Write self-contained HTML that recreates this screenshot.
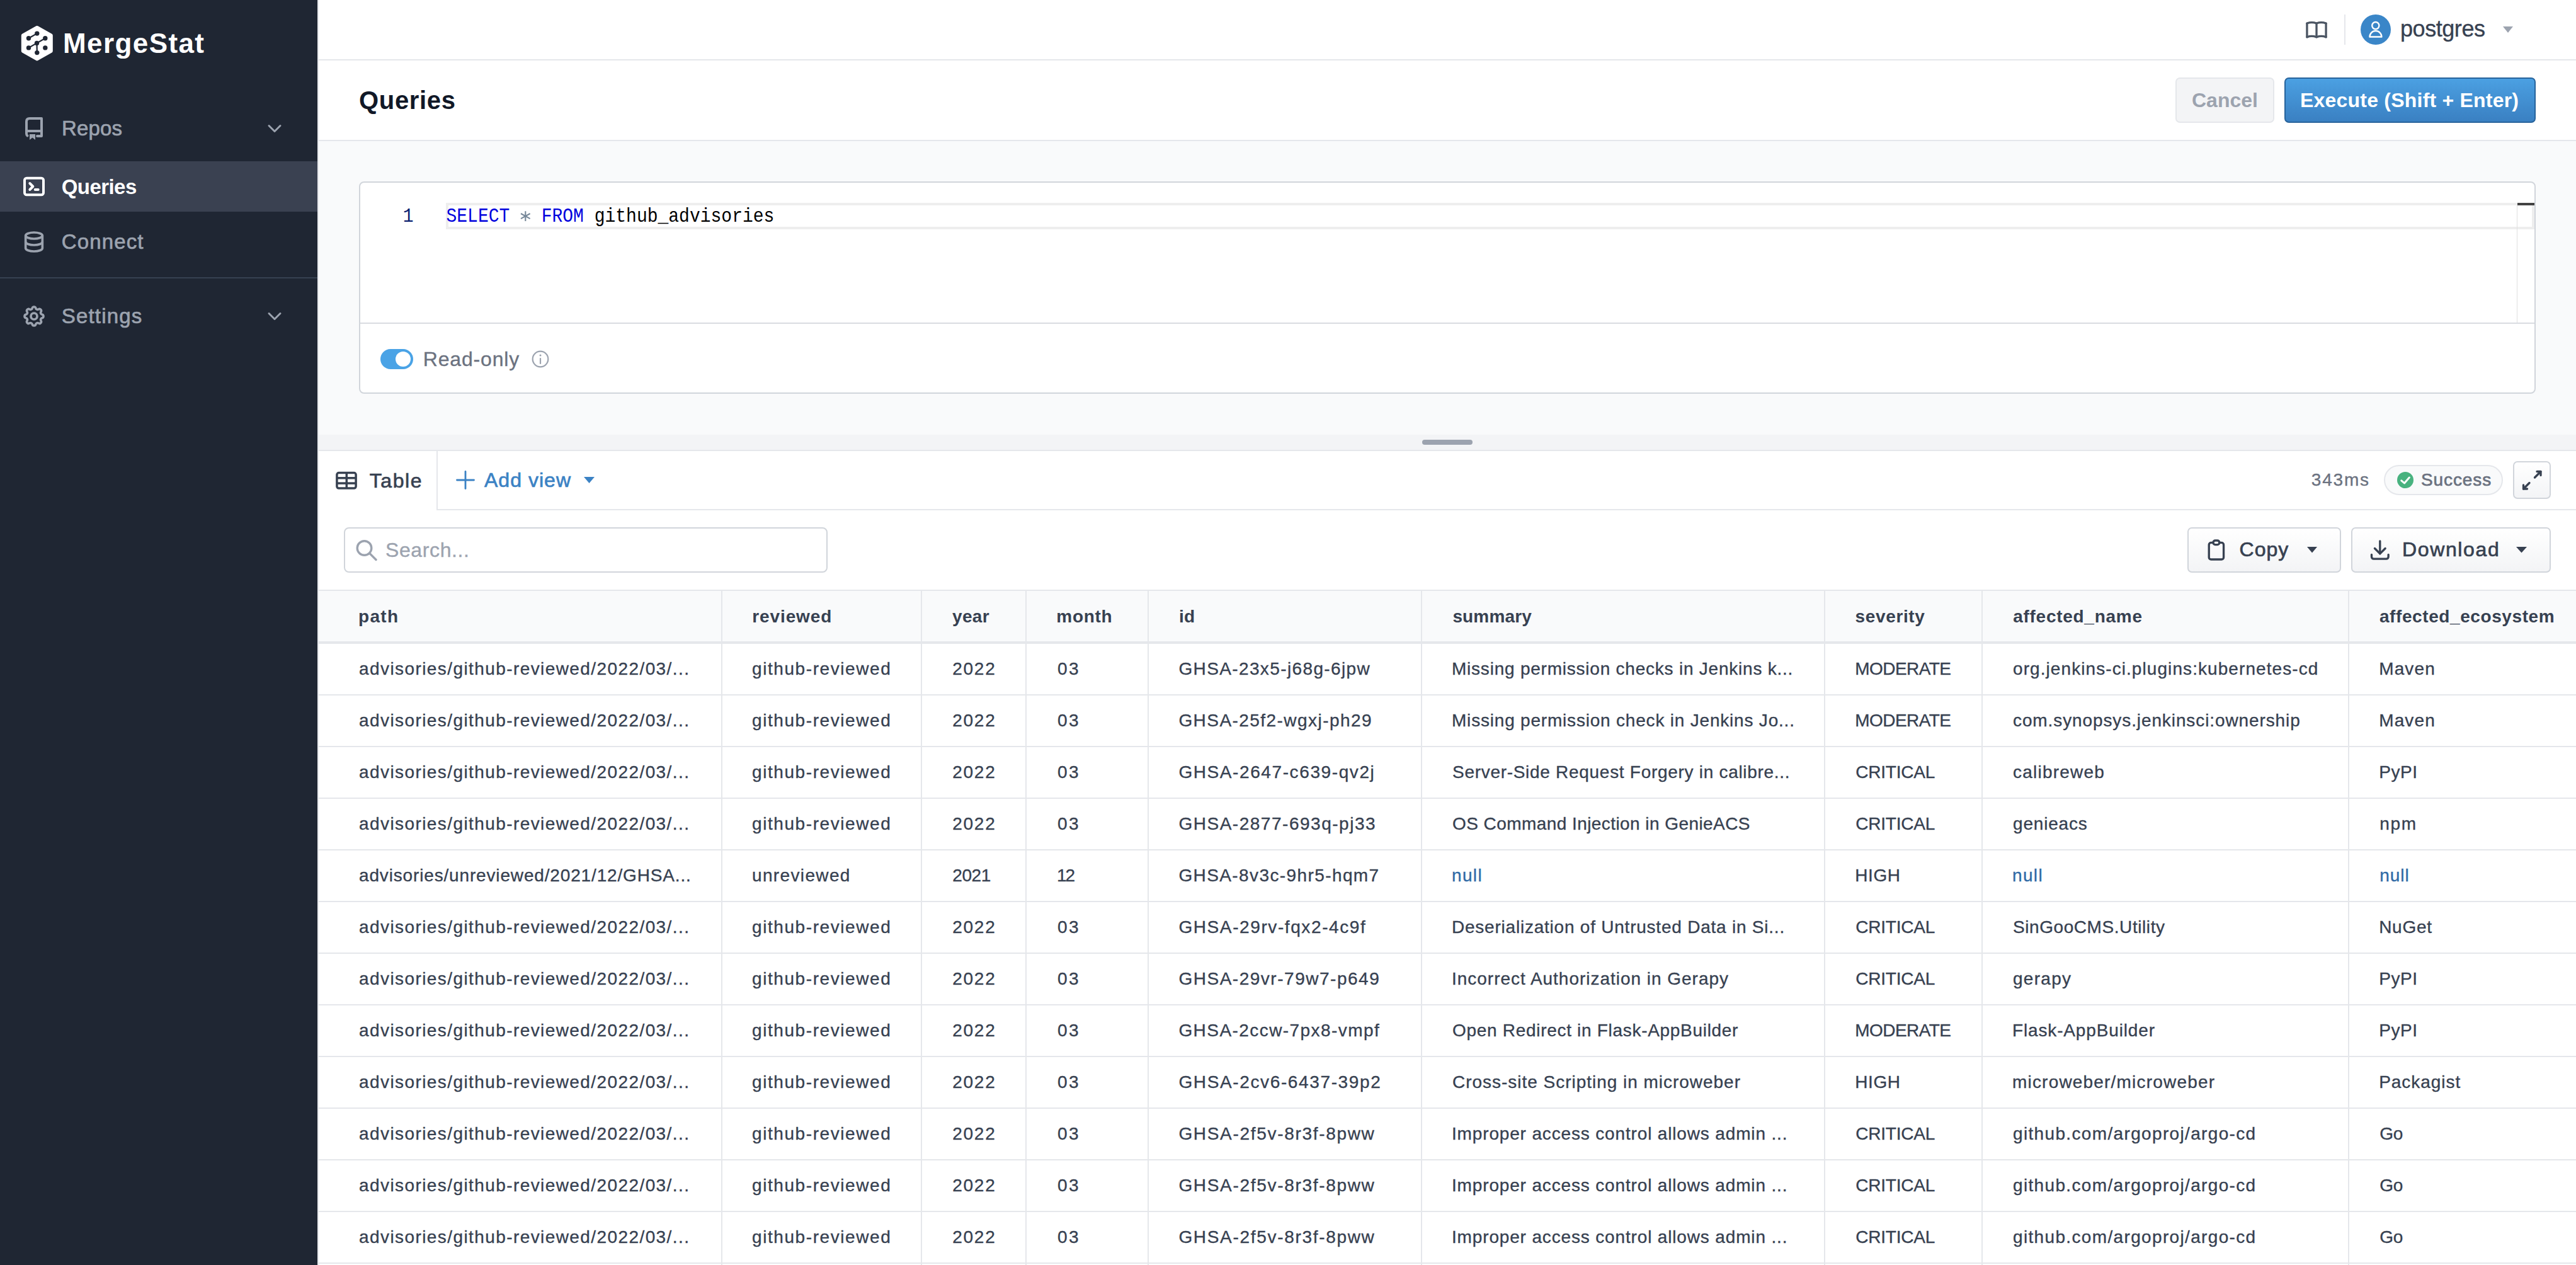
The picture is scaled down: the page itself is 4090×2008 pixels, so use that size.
<!DOCTYPE html><html><head><meta charset="utf-8"><style>html,body{margin:0;padding:0;width:4090px;height:2008px;overflow:hidden;background:#fff;}body{position:relative;font-family:"Liberation Sans",sans-serif;}</style></head><body><div style="position:absolute;left:0px;top:0px;width:504px;height:2008px;background:#1f2633"></div><div style="position:absolute;left:504px;top:0px;width:2px;height:2008px;background:#e5e7eb"></div><svg style="position:absolute;left:30px;top:36px;" width="60" height="64" viewBox="30 36 60 64">
<path d="M58.8 43.8 L81 56.3 L81 81 L58.8 93.6 L36.6 81 L36.6 56.3 Z" fill="#fff" stroke="#fff" stroke-width="5.6" stroke-linejoin="round"/>
<g stroke="#1f2633" stroke-width="2.2" fill="none"><path d="M45.5 60.8 L58.8 53.1"/><path d="M45.5 75.9 L71.8 60.8"/><path d="M58.5 68.5 L58.8 83.6"/></g>
<g fill="#1f2633"><circle cx="58.8" cy="53.1" r="3.7"/><circle cx="45.5" cy="60.8" r="3.7"/><circle cx="71.8" cy="60.8" r="3.7"/><circle cx="58.5" cy="68.5" r="3.7"/><circle cx="45.5" cy="75.9" r="3.7"/><circle cx="71.8" cy="75.9" r="3.7"/><circle cx="58.8" cy="83.6" r="3.7"/></g>
</svg><div style="position:absolute;left:100.00px;top:46.75px;font-family:'Liberation Sans', sans-serif;font-size:44px;line-height:44px;font-weight:700;color:#ffffff;letter-spacing:1.410px;white-space:pre;">MergeStat</div><div style="position:absolute;left:0px;top:256px;width:504px;height:80px;background:#3a4151"></div><div style="position:absolute;left:0px;top:440px;width:504px;height:2px;background:#374151"></div><svg style="position:absolute;left:34px;top:180px;" width="40" height="46" viewBox="34 180 40 46"><g stroke="#9ca3af" stroke-width="4" fill="none" stroke-linecap="round" stroke-linejoin="round">
<path d="M59 216 H66 V188 H47 Q42 188 42 193 V212 Q42 214.5 43.5 215.5"/><path d="M42 208 H66"/></g>
<path d="M47 213 H56 V222 L51.5 218.5 L47 222 Z" fill="#9ca3af"/></svg><div style="position:absolute;left:98.00px;top:187.07px;font-family:'Liberation Sans', sans-serif;font-size:33px;line-height:33px;font-weight:400;color:#9ca3af;letter-spacing:0.152px;white-space:pre;-webkit-text-stroke:0.7px currentColor">Repos</div><svg style="position:absolute;left:420px;top:190px;" width="32" height="26" viewBox="420 190 32 26"><path d="M427 199.5 L436 208.5 L445 199.5" stroke="#9ca3af" stroke-width="3" fill="none" stroke-linecap="round" stroke-linejoin="round"/></svg><svg style="position:absolute;left:34px;top:276px;" width="40" height="40" viewBox="34 276 40 40"><g transform="translate(34 276) scale(1.6667)" stroke="#fff" stroke-width="2.4" fill="none" stroke-linecap="round" stroke-linejoin="round">
<path d="M8 9l3 3l-3 3"/><path d="M13 15l3 0"/><path d="M3 6a2 2 0 0 1 2 -2h14a2 2 0 0 1 2 2v12a2 2 0 0 1 -2 2h-14a2 2 0 0 1 -2 -2z"/></g></svg><div style="position:absolute;left:97.70px;top:279.67px;font-family:'Liberation Sans', sans-serif;font-size:33px;line-height:33px;font-weight:700;color:#ffffff;letter-spacing:-0.551px;white-space:pre;">Queries</div><svg style="position:absolute;left:34px;top:364px;" width="40" height="40" viewBox="34 364 40 40"><g transform="translate(34 364) scale(1.6667)" stroke="#9ca3af" stroke-width="2.2" fill="none" stroke-linecap="round" stroke-linejoin="round">
<path d="M4 6a8 3 0 1 0 16 0a8 3 0 1 0 -16 0"/><path d="M4 6v6a8 3 0 0 0 16 0v-6"/><path d="M4 12v6a8 3 0 0 0 16 0v-6"/></g></svg><div style="position:absolute;left:97.70px;top:367.07px;font-family:'Liberation Sans', sans-serif;font-size:33px;line-height:33px;font-weight:400;color:#9ca3af;letter-spacing:1.147px;white-space:pre;-webkit-text-stroke:0.7px currentColor">Connect</div><svg style="position:absolute;left:34px;top:482px;" width="40" height="40" viewBox="34 482 40 40"><g transform="translate(34 482) scale(1.6667)" stroke="#9ca3af" stroke-width="2.2" fill="none" stroke-linecap="round" stroke-linejoin="round">
<path d="M10.325 4.317c.426 -1.756 2.924 -1.756 3.35 0a1.724 1.724 0 0 0 2.573 1.066c1.543 -.94 3.31 .826 2.37 2.37a1.724 1.724 0 0 0 1.065 2.572c1.756 .426 1.756 2.924 0 3.35a1.724 1.724 0 0 0 -1.066 2.573c.94 1.543 -.826 3.31 -2.37 2.37a1.724 1.724 0 0 0 -2.572 1.065c-.426 1.756 -2.924 1.756 -3.35 0a1.724 1.724 0 0 0 -2.573 -1.066c-1.543 .94 -3.31 -.826 -2.37 -2.37a1.724 1.724 0 0 0 -1.065 -2.572c-1.756 -.426 -1.756 -2.924 0 -3.35a1.724 1.724 0 0 0 1.066 -2.573c-.94 -1.543 .826 -3.31 2.37 -2.37c1 .608 2.296 .07 2.572 -1.065z"/><path d="M9 12a3 3 0 1 0 6 0a3 3 0 1 0 -6 0"/></g></svg><div style="position:absolute;left:97.70px;top:485.07px;font-family:'Liberation Sans', sans-serif;font-size:33px;line-height:33px;font-weight:400;color:#9ca3af;letter-spacing:1.192px;white-space:pre;-webkit-text-stroke:0.7px currentColor">Settings</div><svg style="position:absolute;left:420px;top:488px;" width="32" height="26" viewBox="420 488 32 26"><path d="M427 497.5 L436 506.5 L445 497.5" stroke="#9ca3af" stroke-width="3" fill="none" stroke-linecap="round" stroke-linejoin="round"/></svg><div style="position:absolute;left:506px;top:94px;width:3584px;height:2px;background:#e5e7eb"></div><svg style="position:absolute;left:3655px;top:25px;" width="45" height="43" viewBox="3655 25 45 43"><g transform="translate(3657.9 27) scale(1.675)" stroke="#4b5563" stroke-width="2" fill="none" stroke-linecap="round" stroke-linejoin="round">
<path d="M3 19a13 13 0 0 1 9 0a13 13 0 0 1 9 0"/><path d="M3 6a13 13 0 0 1 9 0a13 13 0 0 1 9 0"/><path d="M3 6l0 13"/><path d="M12 6l0 13"/><path d="M21 6l0 13"/></g></svg><div style="position:absolute;left:3722px;top:23px;width:2px;height:48px;background:#e5e7eb"></div><svg style="position:absolute;left:3746px;top:21px;" width="52" height="52" viewBox="3746 21 52 52"><circle cx="3772" cy="47" r="24" fill="#3a86c8"/>
<circle cx="3771.8" cy="40.6" r="5.6" stroke="#fff" stroke-width="2.4" fill="none"/>
<path d="M3762.4 58.5 A 9.4 9.4 0 0 1 3781.4 58.5 Z" stroke="#fff" stroke-width="2.4" fill="none" stroke-linejoin="round"/></svg><div style="position:absolute;left:3811.00px;top:27.53px;font-family:'Liberation Sans', sans-serif;font-size:36px;line-height:36px;font-weight:400;color:#374151;letter-spacing:-0.440px;white-space:pre;-webkit-text-stroke:0.35px currentColor">postgres</div><svg style="position:absolute;left:3970px;top:38px;" width="24" height="18" viewBox="3970 38 24 18"><path d="M3974 42 H3990 L3982 52 Z" fill="#9ca3af"/></svg><div style="position:absolute;left:506px;top:222px;width:3584px;height:2px;background:#e5e7eb"></div><div style="position:absolute;left:570.00px;top:139.14px;font-family:'Liberation Sans', sans-serif;font-size:40px;line-height:40px;font-weight:700;color:#111827;letter-spacing:0.672px;white-space:pre;">Queries</div><div style="position:absolute;left:3454px;top:123px;width:157px;height:72px;box-sizing:border-box;border:2px solid #e5e7eb;background:#f3f4f6;border-radius:7px"></div><div style="position:absolute;left:3480.00px;top:142.91px;font-family:'Liberation Sans', sans-serif;font-size:32px;line-height:32px;font-weight:700;color:#9ca3af;letter-spacing:0.012px;white-space:pre;">Cancel</div><div style="position:absolute;left:3627px;top:123px;width:399px;height:72px;box-sizing:border-box;border:2px solid #27639b;background:linear-gradient(#4ba0e2,#3a80c2);border-radius:7px"></div><div style="position:absolute;left:3652.00px;top:142.91px;font-family:'Liberation Sans', sans-serif;font-size:32px;line-height:32px;font-weight:700;color:#ffffff;letter-spacing:0.214px;white-space:pre;">Execute (Shift + Enter)</div><div style="position:absolute;left:506px;top:224px;width:3584px;height:466px;background:#f9fafb"></div><div style="position:absolute;left:570px;top:288px;width:3456px;height:337px;box-sizing:border-box;border:2px solid #d1d5db;background:#fff;border-radius:8px"></div><div style="position:absolute;left:708px;top:322px;width:3316px;height:42px;box-sizing:border-box;border:4px solid #eeeeee;border-right-width:4px"></div><div style="position:absolute;left:3996px;top:326px;width:1px;height:187px;background:#e0e0e0"></div><div style="position:absolute;left:3997px;top:322px;width:27px;height:4px;background:#424242"></div><div style="position:absolute;left:639.80px;top:330.54px;font-family:'Liberation Mono', monospace;font-size:28px;line-height:28px;font-weight:400;color:#0b216f;letter-spacing:0.000px;white-space:pre;transform:scaleY(1.15);transform-origin:0 21.46px;">1</div><div style="position:absolute;left:708.50px;top:330.54px;font-family:'Liberation Mono', monospace;font-size:28px;line-height:28px;font-weight:400;color:#0000dd;letter-spacing:0.000px;white-space:pre;transform:scaleY(1.15);transform-origin:0 21.46px;">SELECT</div><div style="position:absolute;left:859.70px;top:330.54px;font-family:'Liberation Mono', monospace;font-size:28px;line-height:28px;font-weight:400;color:#0000dd;letter-spacing:0.000px;white-space:pre;transform:scaleY(1.15);transform-origin:0 21.46px;">FROM</div><div style="position:absolute;left:926.90px;top:330.54px;font-family:'Liberation Mono', monospace;font-size:28px;line-height:28px;font-weight:400;color:#000000;letter-spacing:0.000px;white-space:pre;transform:scaleY(1.15);transform-origin:0 21.46px;"> github_advisories</div><svg style="position:absolute;left:822px;top:332px;" width="26" height="22" viewBox="822 332 26 22"><g stroke="#778899" stroke-width="2.1" stroke-linecap="butt"><path d="M834.3 335.2 V351"/><path d="M827 339 L841.6 347.2"/><path d="M827 347.2 L841.6 339"/></g></svg><div style="position:absolute;left:572px;top:512px;width:3452px;height:2px;background:#d9dce1"></div><div style="position:absolute;left:604px;top:554px;width:52px;height:32px;background:#4aa3e6;border-radius:16px"></div><div style="position:absolute;left:628px;top:558px;width:24px;height:24px;background:#fff;border-radius:12px"></div><div style="position:absolute;left:671.80px;top:553.91px;font-family:'Liberation Sans', sans-serif;font-size:32px;line-height:32px;font-weight:400;color:#6b7280;letter-spacing:0.821px;white-space:pre;-webkit-text-stroke:0.35px currentColor">Read-only</div><svg style="position:absolute;left:840px;top:552px;" width="36" height="36" viewBox="840 552 36 36"><circle cx="858" cy="570" r="12.3" stroke="#9ca3af" stroke-width="2.2" fill="none"/>
<circle cx="858" cy="564" r="1.5" fill="#9ca3af"/><path d="M858 569 V577" stroke="#9ca3af" stroke-width="2.2" stroke-linecap="round"/></svg><div style="position:absolute;left:506px;top:690px;width:3584px;height:24px;background:#f3f4f6"></div><div style="position:absolute;left:2258px;top:698px;width:80px;height:8px;background:#9ca3af;border-radius:4px"></div><div style="position:absolute;left:506px;top:714px;width:3584px;height:2px;background:#e5e7eb"></div><div style="position:absolute;left:694px;top:808px;width:3396px;height:2px;background:#e5e7eb"></div><div style="position:absolute;left:693px;top:716px;width:2px;height:94px;background:#e5e7eb"></div><svg style="position:absolute;left:528px;top:742px;" width="44" height="40" viewBox="528 742 44 40"><g stroke="#374151" stroke-width="3.5" fill="none" stroke-linejoin="round">
<rect x="534.9" y="750.5" width="30.2" height="24.6" rx="3"/><path d="M550.3 750.5 V775"/><path d="M535 758.8 H565"/><path d="M535 767.1 H565"/></g></svg><div style="position:absolute;left:586.70px;top:746.91px;font-family:'Liberation Sans', sans-serif;font-size:32px;line-height:32px;font-weight:400;color:#374151;letter-spacing:1.575px;white-space:pre;-webkit-text-stroke:0.7px currentColor">Table</div><svg style="position:absolute;left:720px;top:743px;" width="38" height="38" viewBox="720 743 38 38"><g stroke="#3b82c4" stroke-width="2.8" stroke-linecap="round"><path d="M739 748.5 V775.5"/><path d="M725.5 762 H752.5"/></g></svg><div style="position:absolute;left:769.00px;top:745.91px;font-family:'Liberation Sans', sans-serif;font-size:32px;line-height:32px;font-weight:400;color:#3b82c4;letter-spacing:1.022px;white-space:pre;-webkit-text-stroke:0.7px currentColor">Add view</div><svg style="position:absolute;left:922px;top:752px;" width="28" height="20" viewBox="922 752 28 20"><path d="M927 757 H944 L935.5 767 Z" fill="#3b82c4"/></svg><div style="position:absolute;left:3669.80px;top:747.90px;font-family:'Liberation Sans', sans-serif;font-size:28px;line-height:28px;font-weight:400;color:#6b7280;letter-spacing:1.788px;white-space:pre;-webkit-text-stroke:0.35px currentColor">343ms</div><div style="position:absolute;left:3785px;top:738px;width:189px;height:48px;box-sizing:border-box;border:2px solid #e5e7eb;background:#f9fafb;border-radius:24px"></div><svg style="position:absolute;left:3800px;top:745px;" width="40" height="35" viewBox="3800 745 40 35"><circle cx="3819" cy="762" r="13" fill="#48b27f"/><path d="M3812.8 762.8 L3817.5 767 L3825.3 758" stroke="#fff" stroke-width="3" fill="none" stroke-linecap="round" stroke-linejoin="round"/></svg><div style="position:absolute;left:3843.90px;top:748.30px;font-family:'Liberation Sans', sans-serif;font-size:28px;line-height:28px;font-weight:400;color:#6b7280;letter-spacing:0.929px;white-space:pre;-webkit-text-stroke:0.7px currentColor">Success</div><div style="position:absolute;left:3990px;top:732px;width:60px;height:60px;box-sizing:border-box;border:2px solid #d1d5db;background:linear-gradient(#fff,#f3f4f6);border-radius:7px"></div><svg style="position:absolute;left:3995px;top:737px;" width="50" height="50" viewBox="3995 737 50 50"><g stroke="#374151" stroke-width="3.3" fill="none" stroke-linecap="round" stroke-linejoin="round">
<path d="M4028 748.5 H4034 V754.5"/><path d="M4024.5 758 L4034 748.5"/><path d="M4012.5 776 H4006.5 V770"/><path d="M4016 766.5 L4006.5 776"/></g></svg><div style="position:absolute;left:546px;top:837px;width:768px;height:72px;box-sizing:border-box;border:2px solid #d1d5db;background:#fff;border-radius:8px"></div><svg style="position:absolute;left:560px;top:850px;" width="46" height="46" viewBox="560 850 46 46"><g stroke="#9ca3af" stroke-width="3.4" fill="none" stroke-linecap="round"><circle cx="578.5" cy="870" r="11.3"/><path d="M587 878.5 L597 888.5"/></g></svg><div style="position:absolute;left:612.00px;top:856.51px;font-family:'Liberation Sans', sans-serif;font-size:32px;line-height:32px;font-weight:400;color:#9ca3af;letter-spacing:0.617px;white-space:pre;-webkit-text-stroke:0.35px currentColor">Search...</div><div style="position:absolute;left:3473px;top:837px;width:244px;height:72px;box-sizing:border-box;border:2px solid #d1d5db;background:linear-gradient(#fff,#f3f4f6);border-radius:7px"></div><svg style="position:absolute;left:3498px;top:852px;" width="42" height="42" viewBox="3498 852 42 42"><g transform="translate(3498.9 853) scale(1.6667)" stroke="#374151" stroke-width="2" fill="none" stroke-linecap="round" stroke-linejoin="round">
<path d="M9 5h-2a2 2 0 0 0 -2 2v12a2 2 0 0 0 2 2h10a2 2 0 0 0 2 -2v-12a2 2 0 0 0 -2 -2h-2"/><path d="M9 5a2 2 0 0 1 2 -2h2a2 2 0 0 1 2 2v0a2 2 0 0 1 -2 2h-2a2 2 0 0 1 -2 -2z"/></g></svg><div style="position:absolute;left:3555.60px;top:856.41px;font-family:'Liberation Sans', sans-serif;font-size:32px;line-height:32px;font-weight:400;color:#374151;letter-spacing:0.966px;white-space:pre;-webkit-text-stroke:0.7px currentColor">Copy</div><svg style="position:absolute;left:3658px;top:862px;" width="26" height="20" viewBox="3658 862 26 20"><path d="M3663 868 H3679 L3671 877.5 Z" fill="#374151"/></svg><div style="position:absolute;left:3733px;top:837px;width:317px;height:72px;box-sizing:border-box;border:2px solid #d1d5db;background:linear-gradient(#fff,#f3f4f6);border-radius:7px"></div><svg style="position:absolute;left:3755px;top:848px;" width="45" height="47" viewBox="3755 848 45 47"><g transform="translate(3758.8 852.2) scale(1.6667)" stroke="#374151" stroke-width="2" fill="none" stroke-linecap="round" stroke-linejoin="round">
<path d="M4 17v2a2 2 0 0 0 2 2h12a2 2 0 0 0 2 -2v-2"/><path d="M7 11l5 5l5 -5"/><path d="M12 4l0 12"/></g></svg><div style="position:absolute;left:3814.00px;top:856.41px;font-family:'Liberation Sans', sans-serif;font-size:32px;line-height:32px;font-weight:400;color:#374151;letter-spacing:1.639px;white-space:pre;-webkit-text-stroke:0.7px currentColor">Download</div><svg style="position:absolute;left:3990px;top:862px;" width="28" height="20" viewBox="3990 862 28 20"><path d="M3995 868 H4012 L4003.5 877.5 Z" fill="#374151"/></svg><div style="position:absolute;left:506px;top:936px;width:3584px;height:2px;background:#e5e7eb"></div><div style="position:absolute;left:506px;top:938px;width:3584px;height:80px;background:#f9fafb"></div><div style="position:absolute;left:506px;top:1018px;width:3584px;height:4px;background:#e5e7eb"></div><div style="position:absolute;left:1144.5px;top:938px;width:2.0px;height:1070px;background:#e5e7eb"></div><div style="position:absolute;left:1461.5px;top:938px;width:2.0px;height:1070px;background:#e5e7eb"></div><div style="position:absolute;left:1627.5px;top:938px;width:2.0px;height:1070px;background:#e5e7eb"></div><div style="position:absolute;left:1821.5px;top:938px;width:2.0px;height:1070px;background:#e5e7eb"></div><div style="position:absolute;left:2255.5px;top:938px;width:2.0px;height:1070px;background:#e5e7eb"></div><div style="position:absolute;left:2896px;top:938px;width:2px;height:1070px;background:#e5e7eb"></div><div style="position:absolute;left:3145.5px;top:938px;width:2.0px;height:1070px;background:#e5e7eb"></div><div style="position:absolute;left:3727.5px;top:938px;width:2.0px;height:1070px;background:#e5e7eb"></div><div style="position:absolute;left:569.00px;top:964.70px;font-family:'Liberation Sans', sans-serif;font-size:28px;line-height:28px;font-weight:700;color:#374151;letter-spacing:1.297px;white-space:pre;">path</div><div style="position:absolute;left:1194.30px;top:964.70px;font-family:'Liberation Sans', sans-serif;font-size:28px;line-height:28px;font-weight:700;color:#374151;letter-spacing:0.877px;white-space:pre;">reviewed</div><div style="position:absolute;left:1512.00px;top:964.70px;font-family:'Liberation Sans', sans-serif;font-size:28px;line-height:28px;font-weight:700;color:#374151;letter-spacing:0.325px;white-space:pre;">year</div><div style="position:absolute;left:1677.30px;top:964.70px;font-family:'Liberation Sans', sans-serif;font-size:28px;line-height:28px;font-weight:700;color:#374151;letter-spacing:0.717px;white-space:pre;">month</div><div style="position:absolute;left:1872.00px;top:964.70px;font-family:'Liberation Sans', sans-serif;font-size:28px;line-height:28px;font-weight:700;color:#374151;letter-spacing:0.300px;white-space:pre;">id</div><div style="position:absolute;left:2306.40px;top:964.70px;font-family:'Liberation Sans', sans-serif;font-size:28px;line-height:28px;font-weight:700;color:#374151;letter-spacing:0.149px;white-space:pre;">summary</div><div style="position:absolute;left:2945.50px;top:964.70px;font-family:'Liberation Sans', sans-serif;font-size:28px;line-height:28px;font-weight:700;color:#374151;letter-spacing:0.647px;white-space:pre;">severity</div><div style="position:absolute;left:3196.20px;top:964.70px;font-family:'Liberation Sans', sans-serif;font-size:28px;line-height:28px;font-weight:700;color:#374151;letter-spacing:0.725px;white-space:pre;">affected_name</div><div style="position:absolute;left:3777.90px;top:964.70px;font-family:'Liberation Sans', sans-serif;font-size:28px;line-height:28px;font-weight:700;color:#374151;letter-spacing:0.593px;white-space:pre;">affected_ecosystem</div><div style="position:absolute;left:506px;top:1102px;width:3584px;height:2px;background:#e5e7eb"></div><div style="position:absolute;left:570.00px;top:1048.30px;font-family:'Liberation Sans', sans-serif;font-size:28px;line-height:28px;font-weight:400;color:#374151;letter-spacing:1.415px;white-space:pre;-webkit-text-stroke:0.35px currentColor">advisories/github-reviewed/2022/03/...</div><div style="position:absolute;left:1194.00px;top:1048.30px;font-family:'Liberation Sans', sans-serif;font-size:28px;line-height:28px;font-weight:400;color:#374151;letter-spacing:1.579px;white-space:pre;-webkit-text-stroke:0.35px currentColor">github-reviewed</div><div style="position:absolute;left:1512.20px;top:1048.30px;font-family:'Liberation Sans', sans-serif;font-size:28px;line-height:28px;font-weight:400;color:#374151;letter-spacing:1.768px;white-space:pre;-webkit-text-stroke:0.35px currentColor">2022</div><div style="position:absolute;left:1679.00px;top:1048.30px;font-family:'Liberation Sans', sans-serif;font-size:28px;line-height:28px;font-weight:400;color:#374151;letter-spacing:2.444px;white-space:pre;-webkit-text-stroke:0.35px currentColor">03</div><div style="position:absolute;left:1871.40px;top:1048.30px;font-family:'Liberation Sans', sans-serif;font-size:28px;line-height:28px;font-weight:400;color:#374151;letter-spacing:1.379px;white-space:pre;-webkit-text-stroke:0.35px currentColor">GHSA-23x5-j68g-6jpw</div><div style="position:absolute;left:2305.00px;top:1048.30px;font-family:'Liberation Sans', sans-serif;font-size:28px;line-height:28px;font-weight:400;color:#374151;letter-spacing:0.775px;white-space:pre;-webkit-text-stroke:0.35px currentColor">Missing permission checks in Jenkins k...</div><div style="position:absolute;left:2945.20px;top:1048.30px;font-family:'Liberation Sans', sans-serif;font-size:28px;line-height:28px;font-weight:400;color:#374151;letter-spacing:-0.543px;white-space:pre;-webkit-text-stroke:0.35px currentColor">MODERATE</div><div style="position:absolute;left:3196.00px;top:1048.30px;font-family:'Liberation Sans', sans-serif;font-size:28px;line-height:28px;font-weight:400;color:#374151;letter-spacing:1.076px;white-space:pre;-webkit-text-stroke:0.35px currentColor">org.jenkins-ci.plugins:kubernetes-cd</div><div style="position:absolute;left:3777.20px;top:1048.30px;font-family:'Liberation Sans', sans-serif;font-size:28px;line-height:28px;font-weight:400;color:#374151;letter-spacing:1.138px;white-space:pre;-webkit-text-stroke:0.35px currentColor">Maven</div><div style="position:absolute;left:506px;top:1184px;width:3584px;height:2px;background:#e5e7eb"></div><div style="position:absolute;left:570.00px;top:1130.30px;font-family:'Liberation Sans', sans-serif;font-size:28px;line-height:28px;font-weight:400;color:#374151;letter-spacing:1.415px;white-space:pre;-webkit-text-stroke:0.35px currentColor">advisories/github-reviewed/2022/03/...</div><div style="position:absolute;left:1194.00px;top:1130.30px;font-family:'Liberation Sans', sans-serif;font-size:28px;line-height:28px;font-weight:400;color:#374151;letter-spacing:1.579px;white-space:pre;-webkit-text-stroke:0.35px currentColor">github-reviewed</div><div style="position:absolute;left:1512.20px;top:1130.30px;font-family:'Liberation Sans', sans-serif;font-size:28px;line-height:28px;font-weight:400;color:#374151;letter-spacing:1.768px;white-space:pre;-webkit-text-stroke:0.35px currentColor">2022</div><div style="position:absolute;left:1679.00px;top:1130.30px;font-family:'Liberation Sans', sans-serif;font-size:28px;line-height:28px;font-weight:400;color:#374151;letter-spacing:2.444px;white-space:pre;-webkit-text-stroke:0.35px currentColor">03</div><div style="position:absolute;left:1871.40px;top:1130.30px;font-family:'Liberation Sans', sans-serif;font-size:28px;line-height:28px;font-weight:400;color:#374151;letter-spacing:1.446px;white-space:pre;-webkit-text-stroke:0.35px currentColor">GHSA-25f2-wgxj-ph29</div><div style="position:absolute;left:2305.00px;top:1130.30px;font-family:'Liberation Sans', sans-serif;font-size:28px;line-height:28px;font-weight:400;color:#374151;letter-spacing:0.800px;white-space:pre;-webkit-text-stroke:0.35px currentColor">Missing permission check in Jenkins Jo...</div><div style="position:absolute;left:2945.20px;top:1130.30px;font-family:'Liberation Sans', sans-serif;font-size:28px;line-height:28px;font-weight:400;color:#374151;letter-spacing:-0.543px;white-space:pre;-webkit-text-stroke:0.35px currentColor">MODERATE</div><div style="position:absolute;left:3196.00px;top:1130.30px;font-family:'Liberation Sans', sans-serif;font-size:28px;line-height:28px;font-weight:400;color:#374151;letter-spacing:0.896px;white-space:pre;-webkit-text-stroke:0.35px currentColor">com.synopsys.jenkinsci:ownership</div><div style="position:absolute;left:3777.20px;top:1130.30px;font-family:'Liberation Sans', sans-serif;font-size:28px;line-height:28px;font-weight:400;color:#374151;letter-spacing:1.138px;white-space:pre;-webkit-text-stroke:0.35px currentColor">Maven</div><div style="position:absolute;left:506px;top:1266px;width:3584px;height:2px;background:#e5e7eb"></div><div style="position:absolute;left:570.00px;top:1212.30px;font-family:'Liberation Sans', sans-serif;font-size:28px;line-height:28px;font-weight:400;color:#374151;letter-spacing:1.415px;white-space:pre;-webkit-text-stroke:0.35px currentColor">advisories/github-reviewed/2022/03/...</div><div style="position:absolute;left:1194.00px;top:1212.30px;font-family:'Liberation Sans', sans-serif;font-size:28px;line-height:28px;font-weight:400;color:#374151;letter-spacing:1.579px;white-space:pre;-webkit-text-stroke:0.35px currentColor">github-reviewed</div><div style="position:absolute;left:1512.20px;top:1212.30px;font-family:'Liberation Sans', sans-serif;font-size:28px;line-height:28px;font-weight:400;color:#374151;letter-spacing:1.768px;white-space:pre;-webkit-text-stroke:0.35px currentColor">2022</div><div style="position:absolute;left:1679.00px;top:1212.30px;font-family:'Liberation Sans', sans-serif;font-size:28px;line-height:28px;font-weight:400;color:#374151;letter-spacing:2.444px;white-space:pre;-webkit-text-stroke:0.35px currentColor">03</div><div style="position:absolute;left:1871.40px;top:1212.30px;font-family:'Liberation Sans', sans-serif;font-size:28px;line-height:28px;font-weight:400;color:#374151;letter-spacing:1.594px;white-space:pre;-webkit-text-stroke:0.35px currentColor">GHSA-2647-c639-qv2j</div><div style="position:absolute;left:2306.00px;top:1212.30px;font-family:'Liberation Sans', sans-serif;font-size:28px;line-height:28px;font-weight:400;color:#374151;letter-spacing:0.707px;white-space:pre;-webkit-text-stroke:0.35px currentColor">Server-Side Request Forgery in calibre...</div><div style="position:absolute;left:2946.20px;top:1212.30px;font-family:'Liberation Sans', sans-serif;font-size:28px;line-height:28px;font-weight:400;color:#374151;letter-spacing:-0.195px;white-space:pre;-webkit-text-stroke:0.35px currentColor">CRITICAL</div><div style="position:absolute;left:3196.00px;top:1212.30px;font-family:'Liberation Sans', sans-serif;font-size:28px;line-height:28px;font-weight:400;color:#374151;letter-spacing:1.218px;white-space:pre;-webkit-text-stroke:0.35px currentColor">calibreweb</div><div style="position:absolute;left:3777.20px;top:1212.30px;font-family:'Liberation Sans', sans-serif;font-size:28px;line-height:28px;font-weight:400;color:#374151;letter-spacing:0.552px;white-space:pre;-webkit-text-stroke:0.35px currentColor">PyPI</div><div style="position:absolute;left:506px;top:1348px;width:3584px;height:2px;background:#e5e7eb"></div><div style="position:absolute;left:570.00px;top:1294.30px;font-family:'Liberation Sans', sans-serif;font-size:28px;line-height:28px;font-weight:400;color:#374151;letter-spacing:1.415px;white-space:pre;-webkit-text-stroke:0.35px currentColor">advisories/github-reviewed/2022/03/...</div><div style="position:absolute;left:1194.00px;top:1294.30px;font-family:'Liberation Sans', sans-serif;font-size:28px;line-height:28px;font-weight:400;color:#374151;letter-spacing:1.579px;white-space:pre;-webkit-text-stroke:0.35px currentColor">github-reviewed</div><div style="position:absolute;left:1512.20px;top:1294.30px;font-family:'Liberation Sans', sans-serif;font-size:28px;line-height:28px;font-weight:400;color:#374151;letter-spacing:1.768px;white-space:pre;-webkit-text-stroke:0.35px currentColor">2022</div><div style="position:absolute;left:1679.00px;top:1294.30px;font-family:'Liberation Sans', sans-serif;font-size:28px;line-height:28px;font-weight:400;color:#374151;letter-spacing:2.444px;white-space:pre;-webkit-text-stroke:0.35px currentColor">03</div><div style="position:absolute;left:1871.40px;top:1294.30px;font-family:'Liberation Sans', sans-serif;font-size:28px;line-height:28px;font-weight:400;color:#374151;letter-spacing:1.520px;white-space:pre;-webkit-text-stroke:0.35px currentColor">GHSA-2877-693q-pj33</div><div style="position:absolute;left:2306.00px;top:1294.30px;font-family:'Liberation Sans', sans-serif;font-size:28px;line-height:28px;font-weight:400;color:#374151;letter-spacing:0.433px;white-space:pre;-webkit-text-stroke:0.35px currentColor">OS Command Injection in GenieACS</div><div style="position:absolute;left:2946.20px;top:1294.30px;font-family:'Liberation Sans', sans-serif;font-size:28px;line-height:28px;font-weight:400;color:#374151;letter-spacing:-0.195px;white-space:pre;-webkit-text-stroke:0.35px currentColor">CRITICAL</div><div style="position:absolute;left:3196.00px;top:1294.30px;font-family:'Liberation Sans', sans-serif;font-size:28px;line-height:28px;font-weight:400;color:#374151;letter-spacing:0.816px;white-space:pre;-webkit-text-stroke:0.35px currentColor">genieacs</div><div style="position:absolute;left:3778.20px;top:1294.30px;font-family:'Liberation Sans', sans-serif;font-size:28px;line-height:28px;font-weight:400;color:#374151;letter-spacing:1.766px;white-space:pre;-webkit-text-stroke:0.35px currentColor">npm</div><div style="position:absolute;left:506px;top:1430px;width:3584px;height:2px;background:#e5e7eb"></div><div style="position:absolute;left:570.00px;top:1376.30px;font-family:'Liberation Sans', sans-serif;font-size:28px;line-height:28px;font-weight:400;color:#374151;letter-spacing:0.843px;white-space:pre;-webkit-text-stroke:0.35px currentColor">advisories/unreviewed/2021/12/GHSA...</div><div style="position:absolute;left:1194.00px;top:1376.30px;font-family:'Liberation Sans', sans-serif;font-size:28px;line-height:28px;font-weight:400;color:#374151;letter-spacing:1.354px;white-space:pre;-webkit-text-stroke:0.35px currentColor">unreviewed</div><div style="position:absolute;left:1512.20px;top:1376.30px;font-family:'Liberation Sans', sans-serif;font-size:28px;line-height:28px;font-weight:400;color:#374151;letter-spacing:-0.367px;white-space:pre;-webkit-text-stroke:0.35px currentColor">2021</div><div style="position:absolute;left:1678.00px;top:1376.30px;font-family:'Liberation Sans', sans-serif;font-size:28px;line-height:28px;font-weight:400;color:#374151;letter-spacing:-1.956px;white-space:pre;-webkit-text-stroke:0.35px currentColor">12</div><div style="position:absolute;left:1871.40px;top:1376.30px;font-family:'Liberation Sans', sans-serif;font-size:28px;line-height:28px;font-weight:400;color:#374151;letter-spacing:1.401px;white-space:pre;-webkit-text-stroke:0.35px currentColor">GHSA-8v3c-9hr5-hqm7</div><div style="position:absolute;left:2305.00px;top:1376.30px;font-family:'Liberation Sans', sans-serif;font-size:28px;line-height:28px;font-weight:400;color:#2f6aa6;letter-spacing:1.337px;white-space:pre;-webkit-text-stroke:0.35px currentColor">null</div><div style="position:absolute;left:2945.20px;top:1376.30px;font-family:'Liberation Sans', sans-serif;font-size:28px;line-height:28px;font-weight:400;color:#374151;letter-spacing:0.601px;white-space:pre;-webkit-text-stroke:0.35px currentColor">HIGH</div><div style="position:absolute;left:3195.00px;top:1376.30px;font-family:'Liberation Sans', sans-serif;font-size:28px;line-height:28px;font-weight:400;color:#2f6aa6;letter-spacing:1.337px;white-space:pre;-webkit-text-stroke:0.35px currentColor">null</div><div style="position:absolute;left:3778.20px;top:1376.30px;font-family:'Liberation Sans', sans-serif;font-size:28px;line-height:28px;font-weight:400;color:#2f6aa6;letter-spacing:1.002px;white-space:pre;-webkit-text-stroke:0.35px currentColor">null</div><div style="position:absolute;left:506px;top:1512px;width:3584px;height:2px;background:#e5e7eb"></div><div style="position:absolute;left:570.00px;top:1458.30px;font-family:'Liberation Sans', sans-serif;font-size:28px;line-height:28px;font-weight:400;color:#374151;letter-spacing:1.415px;white-space:pre;-webkit-text-stroke:0.35px currentColor">advisories/github-reviewed/2022/03/...</div><div style="position:absolute;left:1194.00px;top:1458.30px;font-family:'Liberation Sans', sans-serif;font-size:28px;line-height:28px;font-weight:400;color:#374151;letter-spacing:1.579px;white-space:pre;-webkit-text-stroke:0.35px currentColor">github-reviewed</div><div style="position:absolute;left:1512.20px;top:1458.30px;font-family:'Liberation Sans', sans-serif;font-size:28px;line-height:28px;font-weight:400;color:#374151;letter-spacing:1.768px;white-space:pre;-webkit-text-stroke:0.35px currentColor">2022</div><div style="position:absolute;left:1679.00px;top:1458.30px;font-family:'Liberation Sans', sans-serif;font-size:28px;line-height:28px;font-weight:400;color:#374151;letter-spacing:2.444px;white-space:pre;-webkit-text-stroke:0.35px currentColor">03</div><div style="position:absolute;left:1871.40px;top:1458.30px;font-family:'Liberation Sans', sans-serif;font-size:28px;line-height:28px;font-weight:400;color:#374151;letter-spacing:1.597px;white-space:pre;-webkit-text-stroke:0.35px currentColor">GHSA-29rv-fqx2-4c9f</div><div style="position:absolute;left:2305.00px;top:1458.30px;font-family:'Liberation Sans', sans-serif;font-size:28px;line-height:28px;font-weight:400;color:#374151;letter-spacing:0.774px;white-space:pre;-webkit-text-stroke:0.35px currentColor">Deserialization of Untrusted Data in Si...</div><div style="position:absolute;left:2946.20px;top:1458.30px;font-family:'Liberation Sans', sans-serif;font-size:28px;line-height:28px;font-weight:400;color:#374151;letter-spacing:-0.195px;white-space:pre;-webkit-text-stroke:0.35px currentColor">CRITICAL</div><div style="position:absolute;left:3196.00px;top:1458.30px;font-family:'Liberation Sans', sans-serif;font-size:28px;line-height:28px;font-weight:400;color:#374151;letter-spacing:0.573px;white-space:pre;-webkit-text-stroke:0.35px currentColor">SinGooCMS.Utility</div><div style="position:absolute;left:3777.20px;top:1458.30px;font-family:'Liberation Sans', sans-serif;font-size:28px;line-height:28px;font-weight:400;color:#374151;letter-spacing:0.716px;white-space:pre;-webkit-text-stroke:0.35px currentColor">NuGet</div><div style="position:absolute;left:506px;top:1594px;width:3584px;height:2px;background:#e5e7eb"></div><div style="position:absolute;left:570.00px;top:1540.30px;font-family:'Liberation Sans', sans-serif;font-size:28px;line-height:28px;font-weight:400;color:#374151;letter-spacing:1.415px;white-space:pre;-webkit-text-stroke:0.35px currentColor">advisories/github-reviewed/2022/03/...</div><div style="position:absolute;left:1194.00px;top:1540.30px;font-family:'Liberation Sans', sans-serif;font-size:28px;line-height:28px;font-weight:400;color:#374151;letter-spacing:1.579px;white-space:pre;-webkit-text-stroke:0.35px currentColor">github-reviewed</div><div style="position:absolute;left:1512.20px;top:1540.30px;font-family:'Liberation Sans', sans-serif;font-size:28px;line-height:28px;font-weight:400;color:#374151;letter-spacing:1.768px;white-space:pre;-webkit-text-stroke:0.35px currentColor">2022</div><div style="position:absolute;left:1679.00px;top:1540.30px;font-family:'Liberation Sans', sans-serif;font-size:28px;line-height:28px;font-weight:400;color:#374151;letter-spacing:2.444px;white-space:pre;-webkit-text-stroke:0.35px currentColor">03</div><div style="position:absolute;left:1871.40px;top:1540.30px;font-family:'Liberation Sans', sans-serif;font-size:28px;line-height:28px;font-weight:400;color:#374151;letter-spacing:1.520px;white-space:pre;-webkit-text-stroke:0.35px currentColor">GHSA-29vr-79w7-p649</div><div style="position:absolute;left:2305.00px;top:1540.30px;font-family:'Liberation Sans', sans-serif;font-size:28px;line-height:28px;font-weight:400;color:#374151;letter-spacing:0.976px;white-space:pre;-webkit-text-stroke:0.35px currentColor">Incorrect Authorization in Gerapy</div><div style="position:absolute;left:2946.20px;top:1540.30px;font-family:'Liberation Sans', sans-serif;font-size:28px;line-height:28px;font-weight:400;color:#374151;letter-spacing:-0.195px;white-space:pre;-webkit-text-stroke:0.35px currentColor">CRITICAL</div><div style="position:absolute;left:3196.00px;top:1540.30px;font-family:'Liberation Sans', sans-serif;font-size:28px;line-height:28px;font-weight:400;color:#374151;letter-spacing:1.275px;white-space:pre;-webkit-text-stroke:0.35px currentColor">gerapy</div><div style="position:absolute;left:3777.20px;top:1540.30px;font-family:'Liberation Sans', sans-serif;font-size:28px;line-height:28px;font-weight:400;color:#374151;letter-spacing:0.552px;white-space:pre;-webkit-text-stroke:0.35px currentColor">PyPI</div><div style="position:absolute;left:506px;top:1676px;width:3584px;height:2px;background:#e5e7eb"></div><div style="position:absolute;left:570.00px;top:1622.30px;font-family:'Liberation Sans', sans-serif;font-size:28px;line-height:28px;font-weight:400;color:#374151;letter-spacing:1.415px;white-space:pre;-webkit-text-stroke:0.35px currentColor">advisories/github-reviewed/2022/03/...</div><div style="position:absolute;left:1194.00px;top:1622.30px;font-family:'Liberation Sans', sans-serif;font-size:28px;line-height:28px;font-weight:400;color:#374151;letter-spacing:1.579px;white-space:pre;-webkit-text-stroke:0.35px currentColor">github-reviewed</div><div style="position:absolute;left:1512.20px;top:1622.30px;font-family:'Liberation Sans', sans-serif;font-size:28px;line-height:28px;font-weight:400;color:#374151;letter-spacing:1.768px;white-space:pre;-webkit-text-stroke:0.35px currentColor">2022</div><div style="position:absolute;left:1679.00px;top:1622.30px;font-family:'Liberation Sans', sans-serif;font-size:28px;line-height:28px;font-weight:400;color:#374151;letter-spacing:2.444px;white-space:pre;-webkit-text-stroke:0.35px currentColor">03</div><div style="position:absolute;left:1871.40px;top:1622.30px;font-family:'Liberation Sans', sans-serif;font-size:28px;line-height:28px;font-weight:400;color:#374151;letter-spacing:1.437px;white-space:pre;-webkit-text-stroke:0.35px currentColor">GHSA-2ccw-7px8-vmpf</div><div style="position:absolute;left:2306.00px;top:1622.30px;font-family:'Liberation Sans', sans-serif;font-size:28px;line-height:28px;font-weight:400;color:#374151;letter-spacing:0.698px;white-space:pre;-webkit-text-stroke:0.35px currentColor">Open Redirect in Flask-AppBuilder</div><div style="position:absolute;left:2945.20px;top:1622.30px;font-family:'Liberation Sans', sans-serif;font-size:28px;line-height:28px;font-weight:400;color:#374151;letter-spacing:-0.543px;white-space:pre;-webkit-text-stroke:0.35px currentColor">MODERATE</div><div style="position:absolute;left:3195.00px;top:1622.30px;font-family:'Liberation Sans', sans-serif;font-size:28px;line-height:28px;font-weight:400;color:#374151;letter-spacing:0.853px;white-space:pre;-webkit-text-stroke:0.35px currentColor">Flask-AppBuilder</div><div style="position:absolute;left:3777.20px;top:1622.30px;font-family:'Liberation Sans', sans-serif;font-size:28px;line-height:28px;font-weight:400;color:#374151;letter-spacing:0.552px;white-space:pre;-webkit-text-stroke:0.35px currentColor">PyPI</div><div style="position:absolute;left:506px;top:1758px;width:3584px;height:2px;background:#e5e7eb"></div><div style="position:absolute;left:570.00px;top:1704.30px;font-family:'Liberation Sans', sans-serif;font-size:28px;line-height:28px;font-weight:400;color:#374151;letter-spacing:1.415px;white-space:pre;-webkit-text-stroke:0.35px currentColor">advisories/github-reviewed/2022/03/...</div><div style="position:absolute;left:1194.00px;top:1704.30px;font-family:'Liberation Sans', sans-serif;font-size:28px;line-height:28px;font-weight:400;color:#374151;letter-spacing:1.579px;white-space:pre;-webkit-text-stroke:0.35px currentColor">github-reviewed</div><div style="position:absolute;left:1512.20px;top:1704.30px;font-family:'Liberation Sans', sans-serif;font-size:28px;line-height:28px;font-weight:400;color:#374151;letter-spacing:1.768px;white-space:pre;-webkit-text-stroke:0.35px currentColor">2022</div><div style="position:absolute;left:1679.00px;top:1704.30px;font-family:'Liberation Sans', sans-serif;font-size:28px;line-height:28px;font-weight:400;color:#374151;letter-spacing:2.444px;white-space:pre;-webkit-text-stroke:0.35px currentColor">03</div><div style="position:absolute;left:1871.40px;top:1704.30px;font-family:'Liberation Sans', sans-serif;font-size:28px;line-height:28px;font-weight:400;color:#374151;letter-spacing:1.630px;white-space:pre;-webkit-text-stroke:0.35px currentColor">GHSA-2cv6-6437-39p2</div><div style="position:absolute;left:2306.00px;top:1704.30px;font-family:'Liberation Sans', sans-serif;font-size:28px;line-height:28px;font-weight:400;color:#374151;letter-spacing:0.976px;white-space:pre;-webkit-text-stroke:0.35px currentColor">Cross-site Scripting in microweber</div><div style="position:absolute;left:2945.20px;top:1704.30px;font-family:'Liberation Sans', sans-serif;font-size:28px;line-height:28px;font-weight:400;color:#374151;letter-spacing:0.601px;white-space:pre;-webkit-text-stroke:0.35px currentColor">HIGH</div><div style="position:absolute;left:3195.00px;top:1704.30px;font-family:'Liberation Sans', sans-serif;font-size:28px;line-height:28px;font-weight:400;color:#374151;letter-spacing:1.191px;white-space:pre;-webkit-text-stroke:0.35px currentColor">microweber/microweber</div><div style="position:absolute;left:3777.20px;top:1704.30px;font-family:'Liberation Sans', sans-serif;font-size:28px;line-height:28px;font-weight:400;color:#374151;letter-spacing:0.948px;white-space:pre;-webkit-text-stroke:0.35px currentColor">Packagist</div><div style="position:absolute;left:506px;top:1840px;width:3584px;height:2px;background:#e5e7eb"></div><div style="position:absolute;left:570.00px;top:1786.30px;font-family:'Liberation Sans', sans-serif;font-size:28px;line-height:28px;font-weight:400;color:#374151;letter-spacing:1.415px;white-space:pre;-webkit-text-stroke:0.35px currentColor">advisories/github-reviewed/2022/03/...</div><div style="position:absolute;left:1194.00px;top:1786.30px;font-family:'Liberation Sans', sans-serif;font-size:28px;line-height:28px;font-weight:400;color:#374151;letter-spacing:1.579px;white-space:pre;-webkit-text-stroke:0.35px currentColor">github-reviewed</div><div style="position:absolute;left:1512.20px;top:1786.30px;font-family:'Liberation Sans', sans-serif;font-size:28px;line-height:28px;font-weight:400;color:#374151;letter-spacing:1.768px;white-space:pre;-webkit-text-stroke:0.35px currentColor">2022</div><div style="position:absolute;left:1679.00px;top:1786.30px;font-family:'Liberation Sans', sans-serif;font-size:28px;line-height:28px;font-weight:400;color:#374151;letter-spacing:2.444px;white-space:pre;-webkit-text-stroke:0.35px currentColor">03</div><div style="position:absolute;left:1871.40px;top:1786.30px;font-family:'Liberation Sans', sans-serif;font-size:28px;line-height:28px;font-weight:400;color:#374151;letter-spacing:1.685px;white-space:pre;-webkit-text-stroke:0.35px currentColor">GHSA-2f5v-8r3f-8pww</div><div style="position:absolute;left:2305.00px;top:1786.30px;font-family:'Liberation Sans', sans-serif;font-size:28px;line-height:28px;font-weight:400;color:#374151;letter-spacing:0.844px;white-space:pre;-webkit-text-stroke:0.35px currentColor">Improper access control allows admin ...</div><div style="position:absolute;left:2946.20px;top:1786.30px;font-family:'Liberation Sans', sans-serif;font-size:28px;line-height:28px;font-weight:400;color:#374151;letter-spacing:-0.195px;white-space:pre;-webkit-text-stroke:0.35px currentColor">CRITICAL</div><div style="position:absolute;left:3196.00px;top:1786.30px;font-family:'Liberation Sans', sans-serif;font-size:28px;line-height:28px;font-weight:400;color:#374151;letter-spacing:1.345px;white-space:pre;-webkit-text-stroke:0.35px currentColor">github.com/argoproj/argo-cd</div><div style="position:absolute;left:3778.20px;top:1786.30px;font-family:'Liberation Sans', sans-serif;font-size:28px;line-height:28px;font-weight:400;color:#374151;letter-spacing:-0.159px;white-space:pre;-webkit-text-stroke:0.35px currentColor">Go</div><div style="position:absolute;left:506px;top:1922px;width:3584px;height:2px;background:#e5e7eb"></div><div style="position:absolute;left:570.00px;top:1868.30px;font-family:'Liberation Sans', sans-serif;font-size:28px;line-height:28px;font-weight:400;color:#374151;letter-spacing:1.415px;white-space:pre;-webkit-text-stroke:0.35px currentColor">advisories/github-reviewed/2022/03/...</div><div style="position:absolute;left:1194.00px;top:1868.30px;font-family:'Liberation Sans', sans-serif;font-size:28px;line-height:28px;font-weight:400;color:#374151;letter-spacing:1.579px;white-space:pre;-webkit-text-stroke:0.35px currentColor">github-reviewed</div><div style="position:absolute;left:1512.20px;top:1868.30px;font-family:'Liberation Sans', sans-serif;font-size:28px;line-height:28px;font-weight:400;color:#374151;letter-spacing:1.768px;white-space:pre;-webkit-text-stroke:0.35px currentColor">2022</div><div style="position:absolute;left:1679.00px;top:1868.30px;font-family:'Liberation Sans', sans-serif;font-size:28px;line-height:28px;font-weight:400;color:#374151;letter-spacing:2.444px;white-space:pre;-webkit-text-stroke:0.35px currentColor">03</div><div style="position:absolute;left:1871.40px;top:1868.30px;font-family:'Liberation Sans', sans-serif;font-size:28px;line-height:28px;font-weight:400;color:#374151;letter-spacing:1.685px;white-space:pre;-webkit-text-stroke:0.35px currentColor">GHSA-2f5v-8r3f-8pww</div><div style="position:absolute;left:2305.00px;top:1868.30px;font-family:'Liberation Sans', sans-serif;font-size:28px;line-height:28px;font-weight:400;color:#374151;letter-spacing:0.844px;white-space:pre;-webkit-text-stroke:0.35px currentColor">Improper access control allows admin ...</div><div style="position:absolute;left:2946.20px;top:1868.30px;font-family:'Liberation Sans', sans-serif;font-size:28px;line-height:28px;font-weight:400;color:#374151;letter-spacing:-0.195px;white-space:pre;-webkit-text-stroke:0.35px currentColor">CRITICAL</div><div style="position:absolute;left:3196.00px;top:1868.30px;font-family:'Liberation Sans', sans-serif;font-size:28px;line-height:28px;font-weight:400;color:#374151;letter-spacing:1.345px;white-space:pre;-webkit-text-stroke:0.35px currentColor">github.com/argoproj/argo-cd</div><div style="position:absolute;left:3778.20px;top:1868.30px;font-family:'Liberation Sans', sans-serif;font-size:28px;line-height:28px;font-weight:400;color:#374151;letter-spacing:-0.159px;white-space:pre;-webkit-text-stroke:0.35px currentColor">Go</div><div style="position:absolute;left:506px;top:2004px;width:3584px;height:2px;background:#e5e7eb"></div><div style="position:absolute;left:570.00px;top:1950.30px;font-family:'Liberation Sans', sans-serif;font-size:28px;line-height:28px;font-weight:400;color:#374151;letter-spacing:1.415px;white-space:pre;-webkit-text-stroke:0.35px currentColor">advisories/github-reviewed/2022/03/...</div><div style="position:absolute;left:1194.00px;top:1950.30px;font-family:'Liberation Sans', sans-serif;font-size:28px;line-height:28px;font-weight:400;color:#374151;letter-spacing:1.579px;white-space:pre;-webkit-text-stroke:0.35px currentColor">github-reviewed</div><div style="position:absolute;left:1512.20px;top:1950.30px;font-family:'Liberation Sans', sans-serif;font-size:28px;line-height:28px;font-weight:400;color:#374151;letter-spacing:1.768px;white-space:pre;-webkit-text-stroke:0.35px currentColor">2022</div><div style="position:absolute;left:1679.00px;top:1950.30px;font-family:'Liberation Sans', sans-serif;font-size:28px;line-height:28px;font-weight:400;color:#374151;letter-spacing:2.444px;white-space:pre;-webkit-text-stroke:0.35px currentColor">03</div><div style="position:absolute;left:1871.40px;top:1950.30px;font-family:'Liberation Sans', sans-serif;font-size:28px;line-height:28px;font-weight:400;color:#374151;letter-spacing:1.685px;white-space:pre;-webkit-text-stroke:0.35px currentColor">GHSA-2f5v-8r3f-8pww</div><div style="position:absolute;left:2305.00px;top:1950.30px;font-family:'Liberation Sans', sans-serif;font-size:28px;line-height:28px;font-weight:400;color:#374151;letter-spacing:0.844px;white-space:pre;-webkit-text-stroke:0.35px currentColor">Improper access control allows admin ...</div><div style="position:absolute;left:2946.20px;top:1950.30px;font-family:'Liberation Sans', sans-serif;font-size:28px;line-height:28px;font-weight:400;color:#374151;letter-spacing:-0.195px;white-space:pre;-webkit-text-stroke:0.35px currentColor">CRITICAL</div><div style="position:absolute;left:3196.00px;top:1950.30px;font-family:'Liberation Sans', sans-serif;font-size:28px;line-height:28px;font-weight:400;color:#374151;letter-spacing:1.345px;white-space:pre;-webkit-text-stroke:0.35px currentColor">github.com/argoproj/argo-cd</div><div style="position:absolute;left:3778.20px;top:1950.30px;font-family:'Liberation Sans', sans-serif;font-size:28px;line-height:28px;font-weight:400;color:#374151;letter-spacing:-0.159px;white-space:pre;-webkit-text-stroke:0.35px currentColor">Go</div></body></html>
